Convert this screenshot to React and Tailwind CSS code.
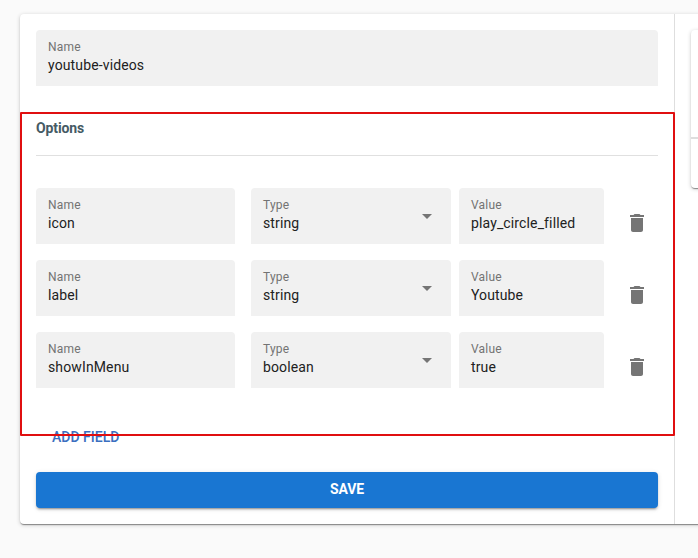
const ROWS = [
  { name: 'icon', type: 'string', value: 'play_circle_filled' },
  { name: 'label', type: 'string', value: 'Youtube' },
  { name: 'showInMenu', type: 'boolean', value: 'true' },
];

const CARD_SHADOW =
  'shadow-[0_2px_1px_-1px_rgba(0,0,0,0.25),0_1px_1px_0_rgba(0,0,0,0.18),0_1px_4px_0_rgba(0,0,0,0.2)]';

function Field({ label, value, className = '', select = false }) {
  return (
    <div className={`flex h-14 justify-between rounded-t bg-[#f1f1f1] pl-3 ${className}`}>
      <div className="pt-[9px]">
        <div className="h-4 text-[12px] leading-4 tracking-[0.2px] text-[#737373]">{label}</div>
        <div className="h-5 text-[14px] leading-5 tracking-[0.13px] text-[#212121]">{value}</div>
      </div>
      {select && (
        <svg className="mt-[26px] mr-[19px] h-[5px] w-[10px]" viewBox="0 0 10 5" fill="#757575">
          <path d="M0 0h10L5 5z" />
        </svg>
      )}
    </div>
  );
}

function TrashIcon() {
  return (
    <svg className="h-6 w-6" viewBox="0 0 24 24" fill="#757575">
      <path d="M6 19c0 1.1.9 2 2 2h8c1.1 0 2-.9 2-2V7H6v12zM19 4h-3.5l-1-1h-5l-1 1H5v2h14V4z" />
    </svg>
  );
}

export default function App() {
  return (
    <div className="h-[558px] w-[698px] overflow-hidden bg-[#fafafa] pt-[14px] pl-5 font-['Roboto',sans-serif]">
      <div className={`flex h-[510px] w-[760px] rounded bg-white ${CARD_SHADOW}`}>
        <div className="relative w-[655px] shrink-0 border-r border-[#dedede] px-4 pt-4">
          <Field label="Name" value="youtube-videos" className="w-[622px]" />
          <h2 className="mt-8 h-5 text-[14px] leading-5 font-bold tracking-[-0.1px] text-[#455a64]">
            Options
          </h2>
          <div className="mt-[17px] h-px w-[622px] bg-[#e0e0e0]" />
          <div className="mt-8 flex flex-col gap-4">
            {ROWS.map((row) => (
              <div key={row.name} className="flex">
                <Field label="Name" value={row.name} className="w-[199px]" />
                <Field label="Type" value={row.type} className="ml-4 w-[200px]" select />
                <Field label="Value" value={row.value} className="ml-2 w-[145px]" />
                <button className="mt-[23px] ml-[21px] h-6 w-6">
                  <TrashIcon />
                </button>
              </div>
            ))}
          </div>
          <button className="mt-8 block h-9 px-4 text-[14px] leading-[34px] font-medium text-[#3b6fc0]">
            <span className="block h-9">ADD FIELD</span>
          </button>
          <button className="mt-4 block h-9 w-[622px] rounded bg-[#1976d2] text-[14px] leading-[34px] font-bold tracking-[-0.1px] text-white shadow-[0_3px_1px_-2px_rgba(0,0,0,0.2),0_2px_2px_0_rgba(0,0,0,0.14),0_1px_5px_0_rgba(0,0,0,0.12)]">
            <span className="block h-9">SAVE</span>
          </button>
          <div className="pointer-events-none absolute top-[98px] -right-px h-[324px] w-[655px] rounded-[1px] border-2 border-[#e00f10]" />
        </div>
        <div className="grow pt-4 pl-4">
          <div className={`h-[158px] w-[80px] rounded bg-white pt-[107px] ${CARD_SHADOW}`}>
            <div className="h-[2px] bg-[#dedede]" />
          </div>
        </div>
      </div>
    </div>
  );
}
